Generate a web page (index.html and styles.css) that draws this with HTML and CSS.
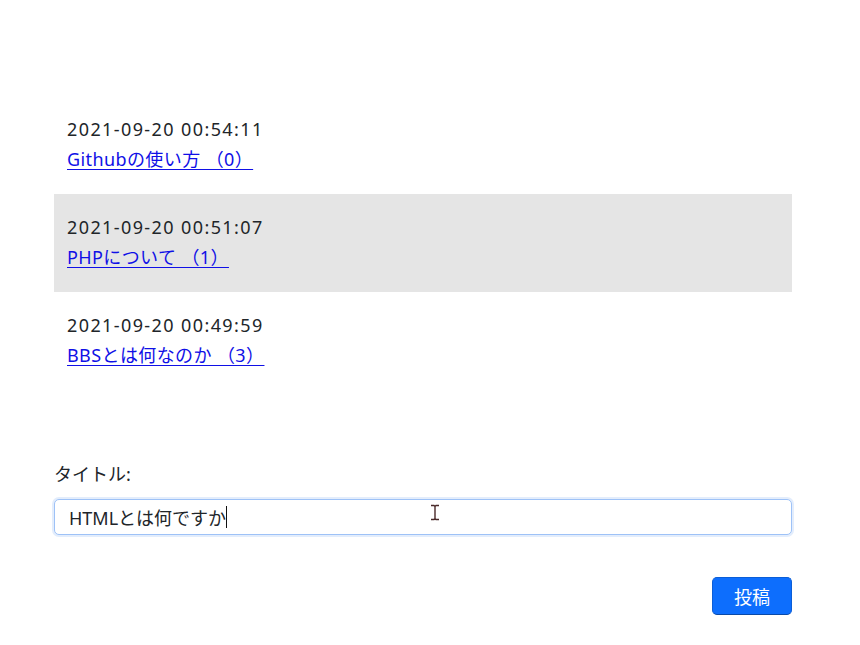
FILE: index.html
```html
<!DOCTYPE html>
<html lang="ja">
<head>
<meta charset="utf-8">
<title>BBS</title>
<link rel="stylesheet" href="styles.css">
</head>
<body>
<main class="page">
  <ul class="threads">
    <li class="thread">
      <div class="date">2021-09-20 00:54:11</div>
      <a class="title" href="#">Githubの使い方 （0） </a>
    </li>
    <li class="thread thread-alt">
      <div class="date">2021-09-20 00:51:07</div>
      <a class="title" href="#">PHPについて （1） </a>
    </li>
    <li class="thread">
      <div class="date">2021-09-20 00:49:59</div>
      <a class="title" href="#">BBSとは何なのか （3） </a>
    </li>
  </ul>
  <form class="post-form">
    <label class="label" for="title">タイトル:</label>
    <div class="field">
      <input class="input" id="title" type="text" value="HTMLとは何ですか"><span class="caret-wrap"><span class="caret-text">HTMLとは何ですか</span><span class="caret"></span></span>
      <svg class="ibeam" width="10" height="17" viewBox="0 0 10 17"><path d="M1 1.5h3l1 1 1-1h3M5 2.5v12M1 15.5h3l1-1 1 1h3" fill="none" stroke="#4a2a2a" stroke-width="1.4"/></svg>
    </div>
    <div class="actions">
      <button class="btn" type="button">投稿</button>
    </div>
  </form>
</main>
</body>
</html>
```
FILE: styles.css
```css
html, body {
  margin: 0;
  padding: 0;
  background: #fff;
}
body {
  font-family: "Noto Sans", "Noto Sans CJK JP", sans-serif;
  font-size: 18px;
  color: #212529;
}
.page {
  width: 738px;
  margin-left: 54px;
  padding-top: 96px;
}
.threads {
  list-style: none;
  margin: 0;
  padding: 0;
}
.thread {
  height: 98px;
  box-sizing: border-box;
  padding: 18px 13px 0;
  line-height: 30px;
}
.thread-alt {
  background: #e5e5e5;
}
.date {
  letter-spacing: 1.4px;
}
.title {
  color: #1010e6;
  text-decoration: underline;
  text-underline-offset: 3px;
  letter-spacing: 0.4px;
}
.post-form {
  margin-top: 69px;
}
.label {
  display: block;
  line-height: 30px;
}
.field {
  position: relative;
  margin-top: 10px;
}
.input {
  display: block;
  box-sizing: border-box;
  width: 100%;
  height: 36px;
  padding: 0 14px;
  font: inherit;
  font-size: 18px;
  color: #212529;
  border: 1px solid #9ec2f7;
  border-radius: 5px;
  box-shadow: 0 0 0 2px #e3edfc;
  outline: none;
  background: #fff;
}
.caret-wrap {
  position: absolute;
  left: 15px;
  top: 0;
  height: 36px;
  display: flex;
  align-items: center;
  pointer-events: none;
}
.caret-text {
  visibility: hidden;
  font-size: 18px;
}
.caret {
  display: inline-block;
  width: 1px;
  height: 22px;
  background: #111;
}
.ibeam {
  position: absolute;
  left: 376px;
  top: 5px;
}
.actions {
  display: flex;
  justify-content: flex-end;
  margin-top: 42px;
}
.btn {
  font: inherit;
  font-size: 18px;
  color: #fff;
  background: #0d6efd;
  border: 1px solid #0b5ed7;
  border-bottom-color: #0a4aa8;
  border-radius: 5px;
  width: 80px;
  height: 38px;
  padding: 0;
  cursor: pointer;
}
```
